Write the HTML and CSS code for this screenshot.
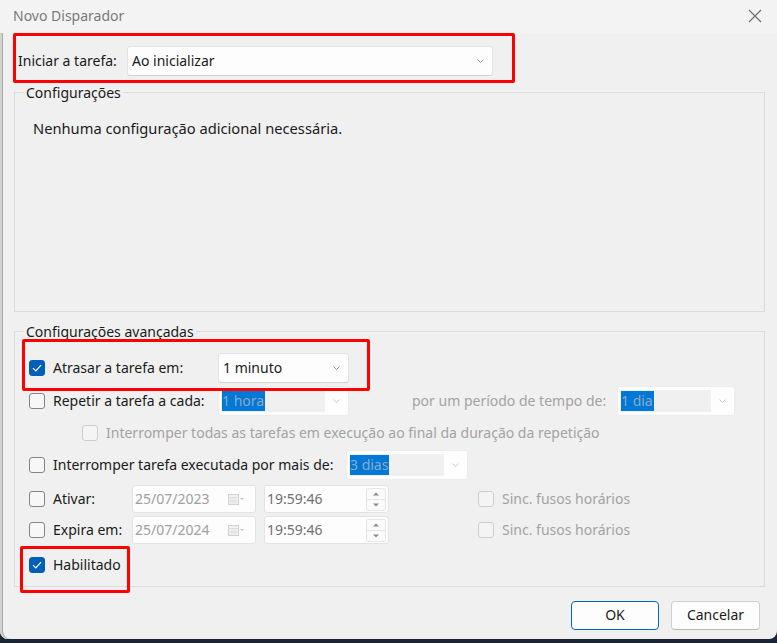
FILE: index.html
```html
<!DOCTYPE html>
<html lang="pt">
<head>
<meta charset="utf-8">
<title>Novo Disparador</title>
<link rel="stylesheet" href="styles.css">
</head>
<body>
<div class="dialog">
  <div class="titlebar">
    <span class="title">Novo Disparador</span>
    <svg class="close" width="14" height="14" viewBox="0 0 14 14"><path d="M1 1L13 13M13 1L1 13" stroke="#6a6a6a" stroke-width="1.1" fill="none"/></svg>
  </div>

  <div class="main">
    <div class="start-row">
      <span class="start-label">Iniciar a tarefa:</span>
      <div class="combo combo-start"><span class="combo-text">Ao inicializar</span><svg class="chev" width="7" height="4" viewBox="0 0 7 4"><path d="M0.5 0.5L3.5 3.5L6.5 0.5" stroke="#9a9a9a" fill="none"/></svg></div>
    </div>

    <div class="group group-config">
      <div class="group-title">Configurações</div>
      <p class="info">Nenhuma configuração adicional necessária.</p>
    </div>

    <div class="group group-adv">
      <div class="group-title">Configurações avançadas</div>

      <div class="row row-a">
        <span class="cb checked"><svg width="10" height="8" viewBox="0 0 10 8"><path d="M1 4.2L3.8 7L9 1.2" stroke="#fff" stroke-width="1.2" fill="none"/></svg></span>
        <span class="lbl w165">Atrasar a tarefa em:</span>
        <div class="combo combo-mid"><span class="combo-text">1 minuto</span><svg class="chev" width="7" height="4" viewBox="0 0 7 4"><path d="M0.5 0.5L3.5 3.5L6.5 0.5" stroke="#9a9a9a" fill="none"/></svg></div>
      </div>

      <div class="row row-b">
        <span class="cb"></span>
        <span class="lbl w165">Repetir a tarefa a cada:</span>
        <div class="combo combo-mid disabled"><span class="dis-field w104"><span class="sel">1 hora</span></span><svg class="chev" width="7" height="4" viewBox="0 0 7 4"><path d="M0.5 0.5L3.5 3.5L6.5 0.5" stroke="#cacaca" fill="none"/></svg></div>
        <span class="lbl gray period">por um período de tempo de:</span>
        <div class="combo combo-day disabled"><span class="dis-field w91"><span class="sel">1 dia</span></span><svg class="chev" width="7" height="4" viewBox="0 0 7 4"><path d="M0.5 0.5L3.5 3.5L6.5 0.5" stroke="#cacaca" fill="none"/></svg></div>
      </div>

      <div class="row row-c">
        <span class="cb dim"></span>
        <span class="lbl gray">Interromper todas as tarefas em execução ao final da duração da repetição</span>
      </div>

      <div class="row row-d">
        <span class="cb"></span>
        <span class="lbl w293">Interromper tarefa executada por mais de:</span>
        <div class="combo combo-stop disabled"><span class="dis-field w95"><span class="sel">3 dias</span></span><svg class="chev" width="7" height="4" viewBox="0 0 7 4"><path d="M0.5 0.5L3.5 3.5L6.5 0.5" stroke="#cacaca" fill="none"/></svg></div>
      </div>

      <div class="row row-e">
        <span class="cb"></span>
        <span class="lbl w79">Ativar:</span>
        <div class="field date"><span class="ftext">25/07/2023</span><span class="cal"><svg width="16" height="11" viewBox="0 0 16 11"><rect x="0.5" y="0.5" width="10" height="10" fill="#f2f2f2" stroke="#cfcfcf"/><path d="M0.5 3.5H10.5M4 3.5V10.5M7 3.5V10.5M0.5 7H10.5" stroke="#dedede"/><path d="M12 4H16L14 6Z" fill="#c4c4c4"/></svg></span></div>
        <div class="field time"><span class="ftext dark">19:59:46</span><span class="spin"><span class="sp"><svg width="6" height="4" viewBox="0 0 6 4"><path d="M0 3.5L3 0.5L6 3.5Z" fill="#8a8a8a"/></svg></span><span class="sp"><svg width="6" height="4" viewBox="0 0 6 4"><path d="M0 0.5L3 3.5L6 0.5Z" fill="#8a8a8a"/></svg></span></span></div>
        <span class="cb dim sinc"></span>
        <span class="lbl gray">Sinc. fusos horários</span>
      </div>

      <div class="row row-f">
        <span class="cb"></span>
        <span class="lbl w79">Expira em:</span>
        <div class="field date"><span class="ftext">25/07/2024</span><span class="cal"><svg width="16" height="11" viewBox="0 0 16 11"><rect x="0.5" y="0.5" width="10" height="10" fill="#f2f2f2" stroke="#cfcfcf"/><path d="M0.5 3.5H10.5M4 3.5V10.5M7 3.5V10.5M0.5 7H10.5" stroke="#dedede"/><path d="M12 4H16L14 6Z" fill="#c4c4c4"/></svg></span></div>
        <div class="field time"><span class="ftext dark">19:59:46</span><span class="spin"><span class="sp"><svg width="6" height="4" viewBox="0 0 6 4"><path d="M0 3.5L3 0.5L6 3.5Z" fill="#8a8a8a"/></svg></span><span class="sp"><svg width="6" height="4" viewBox="0 0 6 4"><path d="M0 0.5L3 3.5L6 0.5Z" fill="#8a8a8a"/></svg></span></span></div>
        <span class="cb dim sinc"></span>
        <span class="lbl gray">Sinc. fusos horários</span>
      </div>

      <div class="row row-g">
        <span class="cb checked"><svg width="10" height="8" viewBox="0 0 10 8"><path d="M1 4.2L3.8 7L9 1.2" stroke="#fff" stroke-width="1.2" fill="none"/></svg></span>
        <span class="lbl">Habilitado</span>
      </div>
    </div>

    <div class="buttons">
      <button class="btn primary">OK</button>
      <button class="btn">Cancelar</button>
    </div>
  </div>

  <div class="mark mark-1"></div>
  <div class="mark mark-2"></div>
  <div class="mark mark-3"></div>
</div>
</body>
</html>
```

FILE: styles.css
```css
* { box-sizing: border-box; }

html, body {
  margin: 0;
  padding: 0;
}

body {
  width: 777px;
  height: 643px;
  background: #1b2435;
  font-family: "Noto Sans", "Open Sans", sans-serif;
  font-size: 14px;
  color: #1a1a1a;
  overflow: hidden;
}

.dialog {
  position: relative;
  width: 777px;
  height: 639px;
  background: #f0f0f0;
  border-radius: 0 0 8px 8px;
  box-shadow: inset 2px 0 0 #d4d4d4, inset 3px 0 0 #a9a9a9;
}

.titlebar {
  height: 33px;
  background: #f3f3f3;
  display: flex;
  align-items: center;
  justify-content: space-between;
  padding: 0 15px 1px 13px;
}

.title {
  font-size: 14px;
  line-height: 18px;
  color: #7a7a7a;
}

.close { display: block; }

.main {
  padding: 0 12px 0 14px;
}

.start-row {
  display: flex;
  align-items: center;
  margin-top: 13px;
  padding-left: 4px;
  height: 30px;
}

.start-label {
  width: 109px;
  line-height: 20px;
}

.combo {
  height: 30px;
  background: #fdfdfd;
  border: 1px solid #e3e3e3;
  border-bottom-color: #d2d2d2;
  border-radius: 3px;
  display: flex;
  align-items: center;
  justify-content: space-between;
  padding: 0 8px 0 4px;
}

.combo-text { line-height: 20px; }

.chev { display: block; flex: none; }

.combo-start { width: 366px; }
.combo-mid { width: 131px; }
.combo-day { width: 118px; }
.combo-stop { width: 122px; }

.combo.disabled {
  padding-left: 2px;
  border-color: #ececec;
  background: #fdfdfd;
}

.dis-field {
  height: 22px;
  background: #f0f0f0;
  display: flex;
  align-items: center;
  padding-left: 1px;
}

.w104 { width: 104px; }
.w91 { width: 91px; }
.w95 { width: 95px; }

.sel {
  background: #0078d7;
  color: #8fa9c4;
  line-height: 20px;
  padding-right: 1px;
}

.group {
  border: 1px solid #dcdcdc;
}

.group-title {
  width: fit-content;
  margin: -9px 0 0 9px;
  padding: 0 2px;
  background: #f0f0f0;
  line-height: 18px;
}

.group-config {
  margin-top: 16px;
  height: 220px;
}

.info {
  margin: 16px 0 0 18px;
  font-size: 14.7px;
  line-height: 20px;
}

.group-adv {
  margin-top: 19px;
  height: 256px;
}

.row {
  display: flex;
  align-items: center;
  padding-left: 14px;
  height: 30px;
}

.row-a { margin-top: 12px; }
.row-b { margin-top: 3px; }
.row-c { margin-top: 2px; padding-left: 67px; }
.row-d { margin-top: 2px; }
.row-e { margin-top: 5px; height: 28px; }
.row-f { margin-top: 3px; height: 28px; }
.row-g { margin-top: 6px; }

.cb {
  flex: none;
  width: 16px;
  height: 16px;
  border: 1px solid #858585;
  border-radius: 3px;
  background: #f7f7f7;
  margin-right: 8px;
  display: flex;
  align-items: center;
  justify-content: center;
}

.cb.checked {
  background: #005fb8;
  border-color: #005fb8;
}

.cb.dim {
  border-color: #cdcdcd;
  background: #f4f4f4;
}

.lbl {
  line-height: 20px;
  white-space: nowrap;
}

.lbl.gray { color: #a3a3a3; }

.w165 { width: 165px; }
.w293 { width: 293px; }
.w79 { width: 79px; }

.period {
  margin-left: 63px;
  width: 205px;
}

.field {
  height: 28px;
  background: #fdfdfd;
  border: 1px solid #e3e3e3;
  border-radius: 3px;
  display: flex;
  align-items: center;
  justify-content: space-between;
}

.date {
  width: 124px;
  padding: 0 11px 0 2px;
}

.time {
  width: 125px;
  margin-left: 8px;
  padding: 0 2px 0 2px;
}

.ftext {
  line-height: 20px;
  color: #a0a0a0;
}

.ftext.dark { color: #6f6f6f; }

.cal svg { display: block; }

.spin {
  width: 20px;
  height: 23px;
  display: flex;
  flex-direction: column;
  border: 1px solid #e6e6e6;
  border-radius: 2px;
}

.sp {
  flex: 1;
  display: flex;
  align-items: center;
  justify-content: center;
  background: #fafafa;
}

.sp + .sp { border-top: 1px solid #e6e6e6; }

.sp svg { display: block; }

.sinc { margin-left: 89px; }

.buttons {
  display: flex;
  justify-content: flex-end;
  gap: 12px;
  margin: 14px 5px 0 0;
}

.btn {
  height: 29px;
  font-family: inherit;
  font-size: 14px;
  color: #1a1a1a;
  background: #fdfdfd;
  border: 1px solid #d0d0d0;
  border-bottom-color: #b8b8b8;
  border-radius: 4px;
  padding: 0 0 2px;
  line-height: 20px;
}

.btn.primary {
  width: 88px;
  border: 1px solid #0067c0;
}

.btn:not(.primary) { width: 89px; }

.mark {
  position: absolute;
  border: 3px solid #ff0000;
  border-radius: 2px;
}

.mark-1 { left: 13px; top: 33px; width: 502px; height: 50px; }
.mark-2 { left: 22px; top: 339px; width: 348px; height: 52px; }
.mark-3 { left: 20px; top: 546px; width: 110px; height: 47px; }
```
